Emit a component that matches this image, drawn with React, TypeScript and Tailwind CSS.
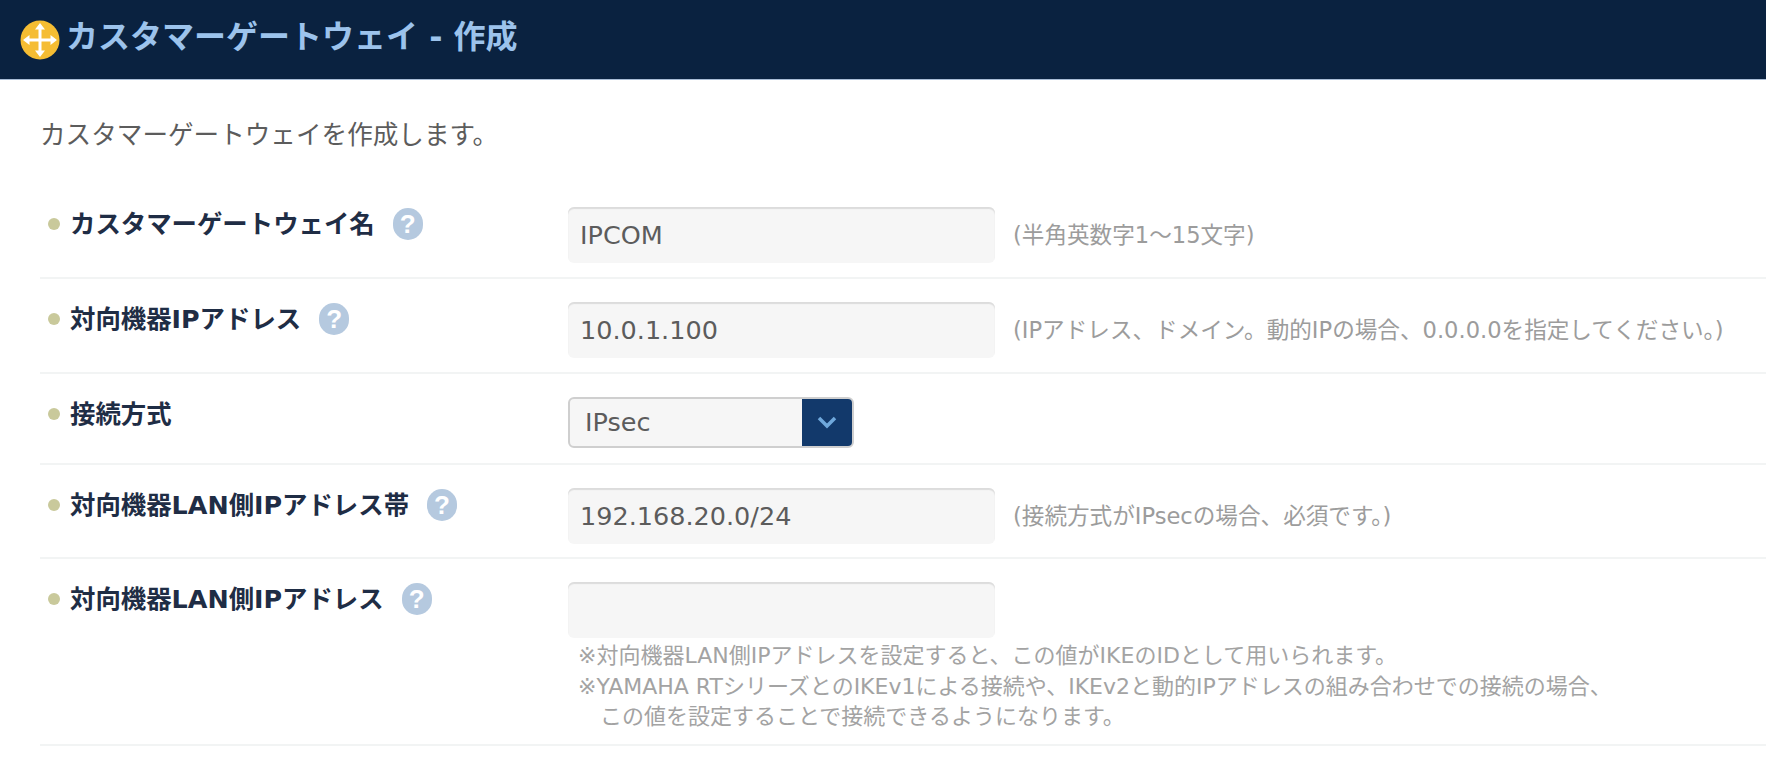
const font = { jp: "font-['DejaVu_Sans','Noto_Sans_CJK_JP',sans-serif]" };

const HelpIcon = () => (
  <span className="ml-[18px] flex h-[32px] w-[30px] shrink-0 items-center justify-center rounded-full bg-[#b5c9df] font-['Liberation_Sans',sans-serif] text-[26px] leading-none font-bold text-white">
    ?
  </span>
);

const Label = ({ text, help = true }: { text: string; help?: boolean }) => (
  <div className="flex h-[34px] w-[528px] shrink-0 items-center pl-[8px]">
    <span className="mr-[10px] h-[12px] w-[12px] shrink-0 rounded-full bg-[#c9c99b]" />
    <span className="text-[25.4px] leading-[34px] font-bold whitespace-nowrap text-[#1f2d45]">{text}</span>
    {help && <HelpIcon />}
  </div>
);

const TextBox = ({ value }: { value: string }) => (
  <input
    readOnly
    value={value}
    className="h-[56px] w-[427px] shrink-0 rounded-[6px] bg-[#f6f6f6] px-[12px] text-[25.5px] text-[#5c5c5c] shadow-[inset_0_2px_1px_#dcdcdc] outline-none"
  />
);

const Hint = ({ text }: { text: string }) => (
  <span className="ml-[18px] pt-[2px] text-[22.6px] whitespace-nowrap text-[#9c9c9c]">{text}</span>
);

const rows = [
  { label: "カスタマーゲートウェイ名", value: "IPCOM", hint: "(半角英数字1〜15文字)" },
  { label: "対向機器IPアドレス", value: "10.0.1.100", hint: "(IPアドレス、ドメイン。動的IPの場合、0.0.0.0を指定してください。)" },
];

export default function App() {
  return (
    <div className={`h-[757px] overflow-hidden bg-white ${font.jp}`}>
      <header className="flex h-[80px] items-center border-b border-[#a9bdd6] bg-[#0a2240] pl-[20px]">
        <svg width="40" height="40" viewBox="0 0 40 40" className="shrink-0">
          <circle cx="20" cy="20" r="19.5" fill="#f5bd33" />
          <path d="M20 3l5 6.5h-3.5v9h9V15l6.5 5-6.5 5v-3.5h-9v9H25L20 37l-5-6.5h3.5v-9h-9V25L3 20l6.5-5v3.5h9v-9H15z" fill="#fff" />
        </svg>
        <h1 className="ml-[6px] pb-[6px] text-[32px] font-bold whitespace-nowrap text-[#9cc3ec]">カスタマーゲートウェイ - 作成</h1>
      </header>

      <div className="pl-[40px]">
        <p className="pt-[35px] pb-[29px] text-[25.6px] leading-[40px] text-[#5c5c5c]">カスタマーゲートウェイを作成します。</p>

        {rows.map((r) => (
          <div key={r.label} className="flex items-start border-b-2 border-[#f2f4f4] pt-[23px] pb-[14px]">
            <Label text={r.label} />
            <div className="flex items-center">
              <TextBox value={r.value} />
              <Hint text={r.hint} />
            </div>
          </div>
        ))}

        <div className="flex items-start border-b-2 border-[#f2f4f4] pt-[23px] pb-[15px]">
          <Label text="接続方式" help={false} />
          <div className="flex h-[51px] w-[286px] overflow-hidden rounded-[6px] border-2 border-[#cfcfcf] bg-[#f6f6f6]">
            <span className="flex-1 pl-[15px] text-[25.5px] leading-[46px] text-[#5c5c5c]">IPsec</span>
            <span className="flex w-[50px] items-center justify-center bg-[#12396b]">
              <svg width="20" height="13" viewBox="0 0 20 13" fill="none" stroke="#6fa8dc" strokeWidth="3.5">
                <path d="M2 2l8 8 8-8" />
              </svg>
            </span>
          </div>
        </div>

        <div className="flex items-start border-b-2 border-[#f2f4f4] pt-[23px] pb-[13px]">
          <Label text="対向機器LAN側IPアドレス帯" />
          <div className="flex items-center">
            <TextBox value="192.168.20.0/24" />
            <Hint text="(接続方式がIPsecの場合、必須です。)" />
          </div>
        </div>

        <div className="flex h-[187px] items-start border-b-2 border-[#f2f4f4] pt-[23px]">
          <Label text="対向機器LAN側IPアドレス" />
          <div>
            <TextBox value="" />
            <div className="pt-[3px] pl-[10px] text-[22px] leading-[30.5px] whitespace-nowrap text-[#a3a3a3]">
              <div>※対向機器LAN側IPアドレスを設定すると、この値がIKEのIDとして用いられます。</div>
              <div>※YAMAHA RTシリーズとのIKEv1による接続や、IKEv2と動的IPアドレスの組み合わせでの接続の場合、</div>
              <div className="pl-[22px]">この値を設定することで接続できるようになります。</div>
            </div>
          </div>
        </div>
      </div>
    </div>
  );
}
